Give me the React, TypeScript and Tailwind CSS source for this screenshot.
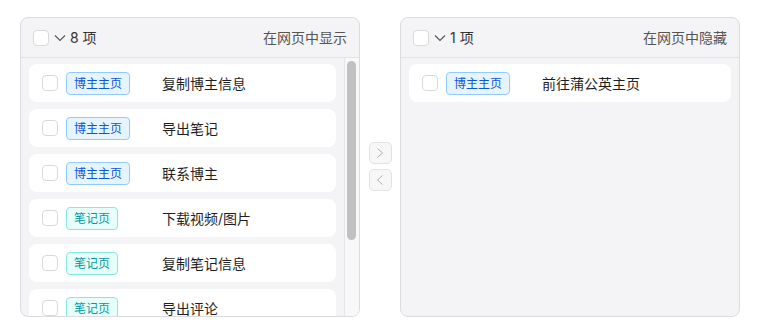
import React from "react";

type Item = { tag: "blog" | "note"; label: string };

// only the rows that fit in the visible area of the list
const shown: Item[] = [
  { tag: "blog", label: "复制博主信息" },
  { tag: "blog", label: "导出笔记" },
  { tag: "blog", label: "联系博主" },
  { tag: "note", label: "下载视频/图片" },
  { tag: "note", label: "复制笔记信息" },
  { tag: "note", label: "导出评论" },
];

const hidden: Item[] = [{ tag: "blog", label: "前往蒲公英主页" }];

function Box() {
  return <span className="h-4 w-4 shrink-0 rounded-[4px] border border-[#d9d9d9] bg-white" />;
}

function Tag({ kind }: { kind: Item["tag"] }) {
  return kind === "blog" ? (
    <span className="inline-block rounded-[4px] border border-[#91caff] bg-[#e6f4ff] px-[7px] text-[12px] leading-[21px] text-[#0958d9]">
      博主主页
    </span>
  ) : (
    <span className="inline-block rounded-[4px] border border-[#87e8de] bg-[#e6fffb] px-[7px] text-[12px] leading-[21px] text-[#08979c]">
      笔记页
    </span>
  );
}

function Row({ item }: { item: Item }) {
  return (
    <div className="flex h-[38px] shrink-0 items-center rounded-lg bg-white pl-[13px]">
      <Box />
      <div className="ml-2 flex w-[96px] items-center">
        <Tag kind={item.tag} />
      </div>
      <span className="text-[14px] text-[#1f1f1f]">{item.label}</span>
    </div>
  );
}

function Panel({
  count,
  title,
  items,
  scroll,
}: {
  count: number;
  title: string;
  items: Item[];
  scroll?: boolean;
}) {
  return (
    <div className="flex h-[300px] w-[340px] flex-col overflow-hidden rounded-lg border border-[#dcdcdf] bg-[#f4f4f6]">
      <div className="flex h-[40px] shrink-0 items-center justify-between border-b border-[#e3e3e6] pl-3 pr-3">
        <div className="flex items-center">
          <Box />
          <svg className="ml-[5px]" width="12" height="10" viewBox="0 0 12 10" fill="none">
            <path d="M1 2.5 6 7.5 11 2.5" stroke="#555" strokeWidth="1.1" />
          </svg>
          <span className="ml-[4px] text-[14px] text-[#333]">{count} 项</span>
        </div>
        <span className="text-[14px] text-[#555]">{title}</span>
      </div>
      <div className="flex min-h-0 flex-1">
        <div className="flex min-w-0 flex-1 flex-col gap-[7px] overflow-hidden pl-2 pr-2 pt-[6px]">
          {items.map((it, i) => (
            <Row key={i} item={it} />
          ))}
        </div>
        {scroll && (
          <div className="w-[15px] shrink-0 border-l border-[#e6e6e8] bg-[#f8f8f8] px-[2px] pt-[3px]">
            <div className="h-[179px] w-[9px] rounded-full bg-[#c1c1c1]" />
          </div>
        )}
      </div>
    </div>
  );
}

function ArrowBtn({ dir }: { dir: "r" | "l" }) {
  return (
    <button className="flex h-[22px] w-[23px] items-center justify-center rounded-[5px] border border-[#e2e2e2] bg-[#f7f7f7]">
      <svg width="8" height="12" viewBox="0 0 8 12" fill="none">
        <path
          d={dir === "r" ? "M1.5 1.5 6.5 6 1.5 10.5" : "M6.5 1.5 1.5 6 6.5 10.5"}
          stroke="#b0b0b0"
          strokeWidth="1"
        />
      </svg>
    </button>
  );
}

export default function App() {
  return (
    <div
      className="flex h-[335px] w-[760px] items-start bg-white pl-5 pt-[17px]"
      style={{ fontFamily: '"Inter", "Noto Sans CJK SC", sans-serif' }}
    >
      <Panel count={8} title="在网页中显示" items={shown} scroll />
      <div className="flex h-[300px] w-[40px] flex-col items-center justify-center gap-[5px] pb-[2px]">
        <ArrowBtn dir="r" />
        <ArrowBtn dir="l" />
      </div>
      <Panel count={1} title="在网页中隐藏" items={hidden} />
    </div>
  );
}
